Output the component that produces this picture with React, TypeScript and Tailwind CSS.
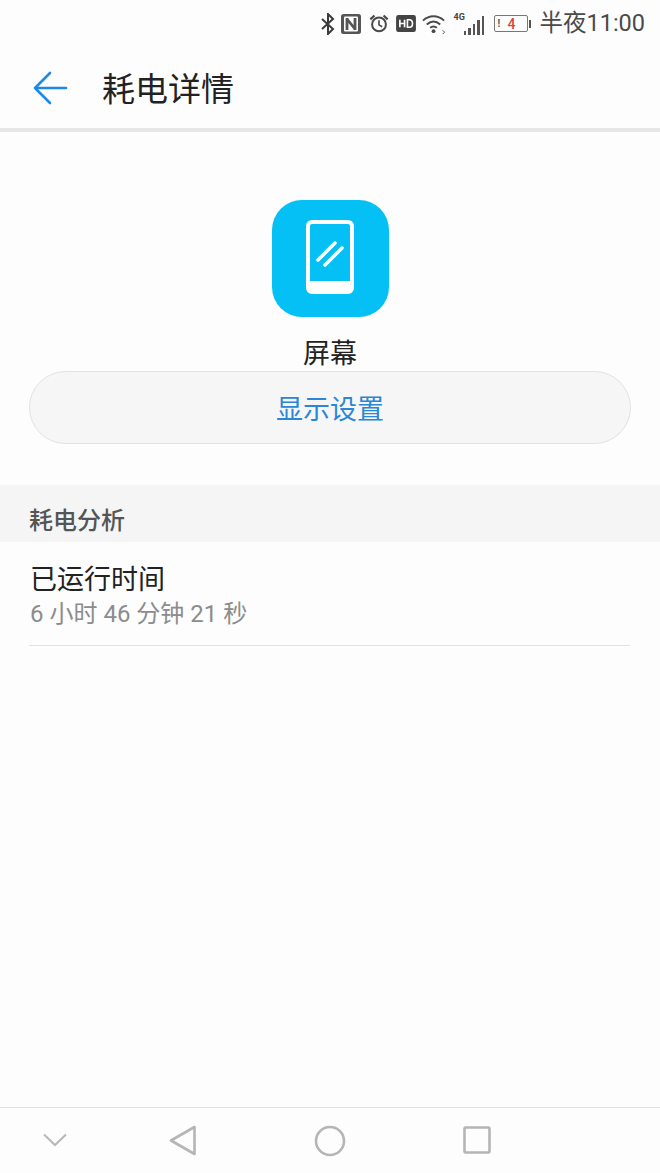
import React from 'react';

const cjk = { fontFamily: '"Noto Sans CJK SC", sans-serif' };

const StatusIcons = () => (
  <div className="flex items-center">
    {/* bluetooth */}
    <svg width="16" height="22" viewBox="0 0 16 22" fill="none" stroke="#3a3a3a" strokeWidth="2">
      <path d="M2 6l11 10-5 5V1l5 5L2 16" />
    </svg>
    {/* nfc */}
    <svg width="20" height="20" viewBox="0 0 20 20" className="ml-[5px]">
      <rect x="0" y="0" width="20" height="20" rx="2.5" fill="#555" />
      <rect x="3" y="2.5" width="14" height="15" rx="1" fill="#fdfdfd" />
      <path d="M6 4v12M14 4v12M6 5l8 10" stroke="#555" strokeWidth="2.8" fill="none" />
    </svg>
    {/* alarm */}
    <svg width="20" height="21" viewBox="0 0 22 22" fill="none" stroke="#4a4a4a" strokeWidth="2.2" className="ml-[8px]">
      <circle cx="11" cy="12" r="7.6" />
      <path d="M11 7.5V12.5L14.5 14.5" strokeWidth="1.8" />
      <path d="M1.5 6.5L6 2.2M20.5 6.5L16 2.2" strokeWidth="2.4" />
    </svg>
    {/* hd */}
    <svg width="20" height="17" viewBox="0 0 21 18" className="ml-[7px]">
      <rect width="21" height="18" rx="2.5" fill="#444" />
      <path d="M4 5v8M9 5v8M4 9h5" stroke="#fdfdfd" strokeWidth="1.8" fill="none" />
      <path d="M12 5v8h2.2c2 0 3.2-1.5 3.2-4s-1.200-4-3.200-4z" stroke="#fdfdfd" strokeWidth="1.700" fill="none" />
    </svg>
    {/* wifi */}
    <svg width="24" height="22" viewBox="0 0 25 22" fill="none" stroke="#4a4a4a" strokeWidth="2" className="ml-[6px]">
      <path d="M1 7.500C7.500 1.500 16.500 1.500 23 7.500" />
      <path d="M5 11.500C9.500 7.500 14.500 7.500 19 11.500" />
      <path d="M8.500 15C10.500 13.300 13.500 13.300 15.500 15" />
      <circle cx="12" cy="18.500" r="2" fill="#4a4a4a" stroke="none" />
      <path d="M21.500 17.500l2 2-2 2" strokeWidth="1" />
    </svg>
    {/* 4g signal */}
    <div className="relative ml-[7px] h-[24px] w-[32px]">
      <span className="absolute left-0 top-[-1px] text-[9px] font-bold leading-[12px] text-[#444]" style={{ fontFamily: 'Roboto, sans-serif' }}>4G</span>
      <div className="absolute bottom-[1px] right-[1px] flex items-end gap-[2px]">
        <div className="h-[4px] w-[2.500px] bg-[#555]" />
        <div className="h-[7px] w-[2.500px] bg-[#555]" />
        <div className="h-[11px] w-[2.500px] bg-[#555]" />
        <div className="h-[15px] w-[2.500px] bg-[#555]" />
        <div className="h-[19px] w-[2.500px] bg-[#555]" />
      </div>
    </div>
    {/* battery */}
    <div className="ml-[9px] flex items-center">
      <div className="relative flex h-[17px] w-[34px] items-center justify-center rounded-[2px] border border-[#777]">
        <span className="absolute left-[2px] top-[-1px] text-[10px] font-bold leading-[17px] text-[#555]" style={{ fontFamily: 'Roboto, sans-serif' }}>!</span>
        <span className="text-[14px] font-medium leading-none text-[#d9453a]" style={{ fontFamily: 'Roboto, sans-serif' }}>4</span>
      </div>
      <div className="ml-[1px] h-[8px] w-[2px] bg-[#555]" />
    </div>
  </div>
);

const ScreenIcon = () => (
  <div className="flex h-[117px] w-[117px] items-center justify-center rounded-[30px] bg-[#05c0f5] pb-[3px]">
    <svg width="48" height="74" viewBox="0 0 48 74" fill="none" stroke="#fff">
      <rect x="2" y="2" width="44" height="70" rx="4" strokeWidth="4" fill="none" />
      <rect x="2" y="61" width="44" height="11" rx="3" fill="#fff" stroke="none" />
      <path d="M12 40L29 23M19 45L36 28" strokeWidth="3.500" strokeLinecap="round" />
    </svg>
  </div>
);

export default function App() {
  return (
    <div className="flex h-[1173px] w-[660px] flex-col overflow-hidden bg-[#fdfdfd]" style={cjk}>
      {/* status bar */}
      <div className="flex h-[47px] shrink-0 items-center justify-end pr-[15px]">
        <StatusIcons />
        <span className="ml-[8px] text-[23.500px] leading-none text-[#4a4a4a]" style={{ fontFamily: 'Roboto, "Noto Sans CJK SC", sans-serif' }}>半夜11:00</span>
      </div>

      {/* header */}
      <div className="flex h-[85px] shrink-0 items-center border-b-[4px] border-[#e6e6e6] pl-[33px]">
        <svg width="36" height="34" viewBox="0 0 36 34" fill="none" stroke="#1e88e5" strokeWidth="2.600" strokeLinecap="round" strokeLinejoin="round">
          <path d="M33 17H2M17 2L2 17l15 15" />
        </svg>
        <span className="ml-[33px] text-[33px] leading-none text-[#222]">耗电详情</span>
      </div>

      {/* app info */}
      <div className="flex flex-col items-center pt-[68px]">
        <ScreenIcon />
        <span className="mb-[1px] mt-[17px] text-[27px] leading-[36px] text-[#222]">屏幕</span>
      </div>
      <div className="mx-[29px] flex h-[73px] items-center justify-center rounded-full border border-[#e2e2e2] bg-[#f6f6f6]">
        <span className="text-[27px] leading-none text-[#2a86d6]">显示设置</span>
      </div>

      {/* section */}
      <div className="mt-[41px] flex h-[57px] items-center bg-[#f5f5f5] pl-[29px] pt-[10px]">
        <span className="text-[24px] font-medium leading-none text-[#555]">耗电分析</span>
      </div>

      {/* row */}
      <div className="ml-[29px] mr-[30px] flex h-[104px] flex-col border-b border-[#e2e2e2] pl-[1px] pt-[20px]">
        <span className="text-[27px] leading-[32px] text-[#222]">已运行时间</span>
        <span className="mt-[4px] text-[24px] leading-[32px] text-[#8c8c8c]" style={{ fontFamily: 'Roboto, "Noto Sans CJK SC", sans-serif' }}>6 小时 46 分钟 21 秒</span>
      </div>

      <div className="flex-1" />

      {/* nav bar */}
      <div className="relative h-[66px] shrink-0 border-t border-[#e2e2e2] bg-[#fdfdfd]">
        <svg className="absolute left-[43px] top-[25px]" width="24" height="14" viewBox="0 0 24 14" fill="none" stroke="#b8b8b8" strokeWidth="2">
          <path d="M1 1.500L12 12 23 1.500" />
        </svg>
        <svg className="absolute left-[169px] top-[17px]" width="28" height="31" viewBox="0 0 28 31" fill="none" stroke="#b5b5b5" strokeWidth="2.600" strokeLinejoin="round">
          <path d="M25.500 2L2 15.500 25.500 29z" />
        </svg>
        <svg className="absolute left-[314px] top-[17px]" width="32" height="32" viewBox="0 0 32 32" fill="none" stroke="#b5b5b5" strokeWidth="2.600">
          <circle cx="16" cy="16" r="14" />
        </svg>
        <svg className="absolute left-[463px] top-[18px]" width="28" height="28" viewBox="0 0 28 28" fill="none" stroke="#b5b5b5" strokeWidth="2.600" strokeLinejoin="round">
          <rect x="1.500" y="1.500" width="25" height="25" rx="1" />
        </svg>
      </div>
    </div>
  );
}
